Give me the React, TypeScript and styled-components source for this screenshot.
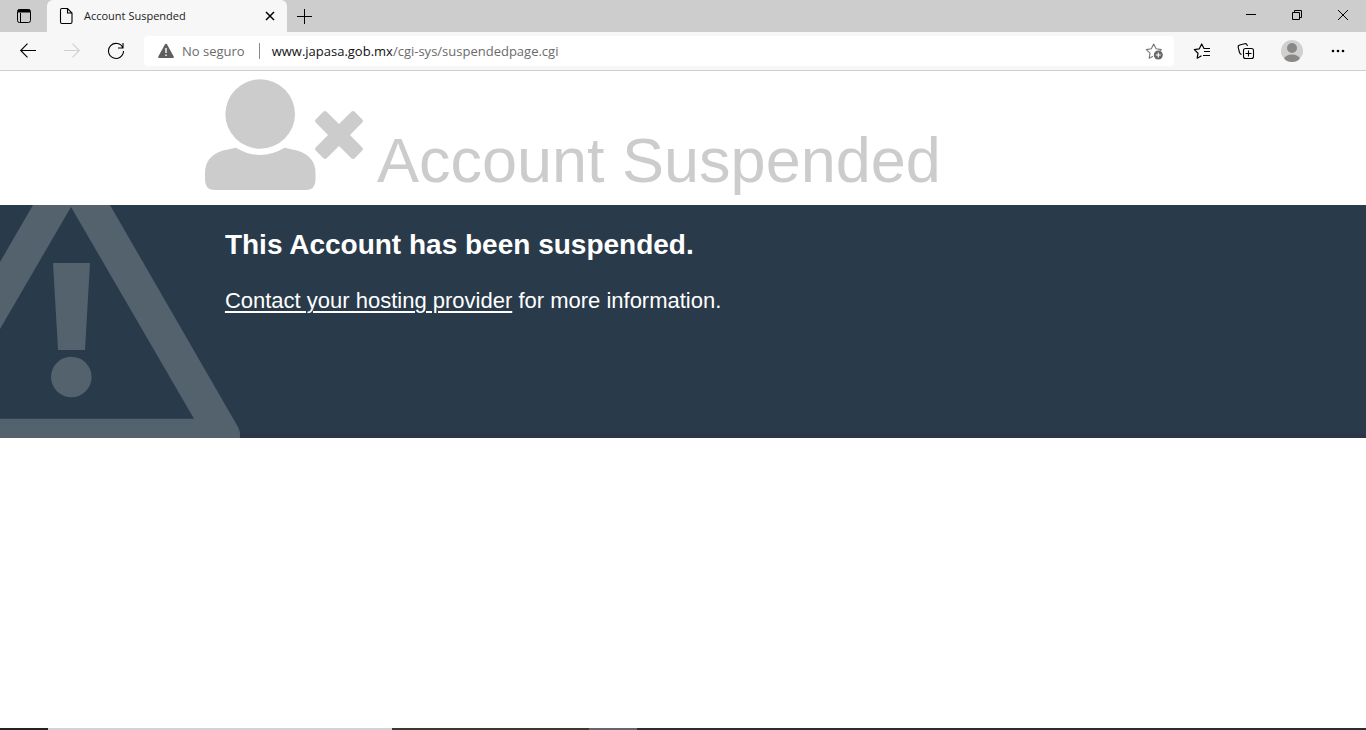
import React from "react";
import styled, { createGlobalStyle } from "styled-components";

const GlobalStyle = createGlobalStyle`
  * { box-sizing: border-box; }
  body { margin: 0; background: #fff; }
  button { border: 0; padding: 0; background: none; font: inherit; color: inherit; }
`;

const ui = `"Open Sans", "Noto Sans", sans-serif`;

const Window = styled.div`
  display: flex;
  flex-direction: column;
  min-height: 100vh;
  font-family: ${ui};
`;

const TitleBar = styled.header`
  display: flex;
  height: 32px;
  background: #cdcdcd;
  color: #000;
`;

const IconButton = styled.button<{ $width: number; $color?: string }>`
  display: flex;
  flex: none;
  align-items: center;
  justify-content: center;
  width: ${(p) => p.$width}px;
  height: 32px;
  color: ${(p) => p.$color ?? "#000"};
`;

const Tab = styled.div`
  display: flex;
  flex: none;
  align-items: center;
  width: 240px;
  padding: 0 8px 0 12px;
  background: #f7f7f7;
  border-radius: 6px 6px 0 0;
  font-size: 11px;
  line-height: 16px;
`;

const TabTitle = styled.span`
  flex: 1;
  margin-left: 10px;
  color: #222;
`;

const WindowControls = styled.div`
  display: flex;
  margin-left: auto;
`;

const Toolbar = styled.nav`
  display: flex;
  align-items: center;
  height: 39px;
  padding: 0 6px;
  background: #f7f7f7;
  border-bottom: 1px solid #cfcfcf;
`;

const AddressBar = styled.div`
  display: flex;
  flex: 1;
  align-items: center;
  height: 30px;
  margin: 0 6px;
  padding: 0 4px 0 14px;
  background: #fff;
  border-radius: 4px;
  font-size: 13px;
  line-height: 18px;
  color: #6b6b6b;
`;

const Security = styled.span`
  margin-left: 8px;
  padding-right: 14px;
  border-right: 1px solid #8a8a8a;
  line-height: 16px;
`;

const Address = styled.div`
  flex: 1;
  margin-left: 12px;
`;

const Host = styled.span`
  color: #111;
`;

const Page = styled.main`
  flex: 1;
  background: #fff;
  font-family: "Liberation Sans", Arial, sans-serif;
`;

const Heading = styled.div`
  display: flex;
  align-items: flex-end;
  gap: 14px;
  height: 134px;
  padding: 0 15% 15px;
  color: #ccc;
`;

const Title = styled.h1`
  margin: 0;
  font-size: 63px;
  line-height: 60px;
  font-weight: 400;
  white-space: nowrap;
`;

const Notice = styled.section`
  display: grid;
  grid-template-columns: 15% 1fr;
  height: 233px;
  background: #293a4a;
  border-bottom: 4px solid #2a3548;
  color: #fff;
`;

const WarningArt = styled.svg`
  display: block;
  width: 240px;
  height: 233px;
  fill: #54626e;
`;

const Message = styled.div`
  padding: 20px;
`;

const Subtitle = styled.h2`
  margin: 4px 0 24px;
  font-size: 28px;
  line-height: 32px;
`;

const Text = styled.p`
  margin: 0;
  font-size: 22px;
  line-height: 32px;
`;

const Contact = styled.a`
  color: inherit;
  text-decoration: underline;
  text-decoration-thickness: 2px;
  text-underline-offset: 3px;
`;

const Taskbar = styled.footer`
  display: grid;
  grid-template-columns: 48px 344px 197px 48px 1fr;
  height: 2px;
  background: #2e2c2d;
`;

const TaskSegment = styled.span<{ $color: string }>`
  background: ${(p) => p.$color};
`;

const line = { fill: "none", stroke: "currentColor" };

export default function App() {
  return (
    <Window>
      <GlobalStyle />
      <TitleBar>
        <IconButton $width={47} aria-label="Tab actions">
          <svg width="16" height="16" {...line}>
            <rect x="1.5" y="1.5" width="13" height="13" rx="2" />
            <path d="M2 3h12" strokeWidth="3" />
            <path d="M4.5 5v9" />
          </svg>
        </IconButton>
        <Tab>
          <svg width="15" height="18" {...line} strokeWidth="1.1">
            <path d="M3 1.5h5.500l4.500 4.500v9q0 1.500-1.500 1.500H3q-1.500 0-1.500-1.500V3Q1.500 1.500 3 1.500ZM8.500 1.500V6H13" />
          </svg>
          <TabTitle>Account Suspended</TabTitle>
          <IconButton $width={18} aria-label="Close tab">
            <svg width="10" height="10" {...line} strokeWidth="1.5">
              <path d="m1 1 8 8M9 1 1 9" />
            </svg>
          </IconButton>
        </Tab>
        <IconButton $width={35} aria-label="New tab">
          <svg width="15" height="15" {...line}>
            <path d="M7.500 0v15M0 7.500h15" />
          </svg>
        </IconButton>
        <WindowControls>
          <IconButton $width={46} aria-label="Minimize">
            <svg width="10" height="10" {...line}><path d="M0 3.500h10" /></svg>
          </IconButton>
          <IconButton $width={46} aria-label="Restore">
            <svg width="10" height="12" {...line}>
              <path d="M.5 2.500h7v7h-7zM2.500 2.500v-2h7v7h-2" />
            </svg>
          </IconButton>
          <IconButton $width={46} aria-label="Close">
            <svg width="12" height="14" {...line}><path d="m1 1 10 10M11 1 1 11" /></svg>
          </IconButton>
        </WindowControls>
      </TitleBar>

      <Toolbar>
        <IconButton $width={44} aria-label="Back">
          <svg width="18" height="16" {...line} strokeWidth="1.1"><path d="M17 7.500H2M8.500.7 1.700 7.500l6.800 6.800" /></svg>
        </IconButton>
        <IconButton $width={44} $color="#cfcfcf" aria-label="Forward">
          <svg width="18" height="16" {...line} strokeWidth="1.1"><path d="M1 7.500h15M9.500.7l6.800 6.800-6.800 6.800" /></svg>
        </IconButton>
        <IconButton $width={44} aria-label="Reload">
          <svg width="18" height="18" {...line} strokeWidth="1.1">
            <path d="M15.900 6A7.500 7.500 0 1 0 16.500 9M16 1v5h-5" />
          </svg>
        </IconButton>
        <AddressBar>
          <svg width="16" height="16" viewBox="0 0 16 16">
            <path d="M8 .8q.7 0 1.100.7l6.600 12q.7 1.500-.9 1.500H1.200q-1.600 0-.9-1.500l6.600-12Q7.300.800 8 .8Z" fill="#5f5f5f" />
            <path d="M8 5v5M8 11.500v1.500" stroke="#fff" strokeWidth="1.400" />
          </svg>
          <Security>No seguro</Security>
          <Address>
            <Host>www.japasa.gob.mx</Host>/cgi-sys/suspendedpage.cgi
          </Address>
          <IconButton $width={32} $color="#777" aria-label="Add to favorites">
            <svg width="18" height="18" {...line} strokeWidth="1.100">
              <path d="m8 14.200-3.800 2 .8-5L1.300 7.600l5-.8L8.700 2l2.400 4.800 5.200.8-1.500 1.500" strokeLinejoin="round" />
              <circle cx="13.300" cy="13" r="4.500" fill="#666" stroke="none" />
              <path d="M13.300 10.500v5M10.800 13h5" stroke="#fff" />
            </svg>
          </IconButton>
        </AddressBar>
        <IconButton $width={44} aria-label="Favorites">
          <svg width="18" height="18" {...line} strokeWidth="1.200">
            <path d="m8.500 13.700-4.300 2.500.8-5L1.300 7.600l5-.8L8.700 2l2.300 4.500h6M11 9.500h6M10 13.500h7" strokeLinejoin="round" />
          </svg>
        </IconButton>
        <IconButton $width={44} aria-label="Collections">
          <svg width="18" height="18" {...line} strokeWidth="1.100">
            <path d="M4.500 12.500Q3 12 2.500 10.500L1.200 5.500Q.8 3.500 2.700 3l5-1.300q1.800-.4 2.400 1.300l.4 1" />
            <rect x="6.500" y="6.500" width="10" height="10" rx="2" />
            <path d="M11.500 8.500v6M8.500 11.500h6" />
          </svg>
        </IconButton>
        <IconButton $width={48} aria-label="Profile">
          <svg width="22" height="22">
            <defs><clipPath id="avatar"><circle cx="11" cy="11" r="11" /></clipPath></defs>
            <g clipPath="url(#avatar)">
              <path d="M0 0h22v22H0z" fill="#d2d0ce" />
              <circle cx="11" cy="8" r="5" fill="#8a8886" />
              <ellipse cx="11" cy="19.500" rx="8" ry="5" fill="#8a8886" />
            </g>
          </svg>
        </IconButton>
        <IconButton $width={44} aria-label="Settings and more">
          <svg width="14" height="4" fill="currentColor">
            <circle cx="2" cy="2" r="1.300" /><circle cx="7" cy="2" r="1.300" /><circle cx="12" cy="2" r="1.300" />
          </svg>
        </IconButton>
      </Toolbar>

      <Page>
        <Heading>
          <svg width="158" height="111" viewBox="205 79 158 111" fill="#ccc">
            <ellipse cx="260.200" cy="114" rx="34.800" ry="34.700" />
            <path d="M236 147.700Q260 162.300 284.500 147.700L297 150.500Q315.500 156 315.500 173V180Q315.500 190 305.500 190H215Q205 190 205 180V173Q205 156 223 150.500Z" />
            <path d="M323.300 111.800Q325 110.300 326.700 111.800L339 124 351.300 111.800Q353 110.300 354.700 111.800L362.300 119.400Q363.500 121 362.300 122.600L350 135 362.300 147.400Q363.500 149 362.300 150.600L354.700 158.200Q353 159.700 351.300 158.200L339 146 326.700 158.200Q325 159.700 323.300 158.200L315.700 150.600Q314.500 149 315.700 147.400L328 135 315.700 122.600Q314.500 121 315.700 119.400Z" />
          </svg>
          <Title>Account Suspended</Title>
        </Heading>
        <Notice>
          <WarningArt viewBox="0 0 240 233" aria-hidden="true">
            <path fillRule="evenodd" d="M33 0H110L238 222Q240 226 240 229V233H0V213.700H194L71 2 0 124V57Z" />
            <path d="M53 58H90L85 145H58Z" />
            <circle cx="71.300" cy="172" r="20.300" />
          </WarningArt>
          <Message>
            <Subtitle>This Account has been suspended.</Subtitle>
            <Text>
              <Contact href="#">Contact your hosting provider</Contact> for more information.
            </Text>
          </Message>
        </Notice>
      </Page>

      <Taskbar>
        <TaskSegment $color="#24231f" />
        <TaskSegment $color="#d3d3d3" />
        <TaskSegment $color="#3b3832" />
        <TaskSegment $color="#676566" />
      </Taskbar>
    </Window>
  );
}
